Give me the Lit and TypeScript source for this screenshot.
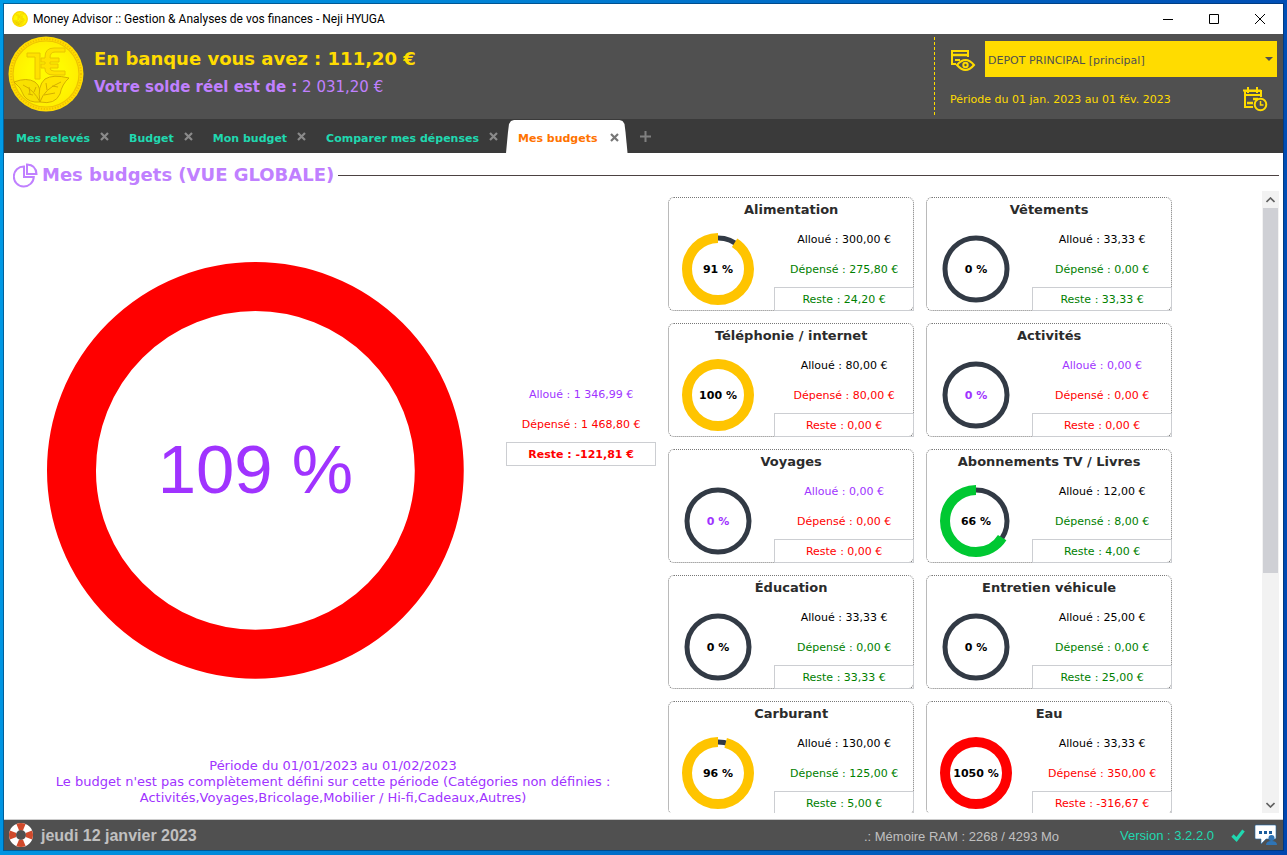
import { LitElement, html, svg, css, nothing } from "lit";
import { customElement, property } from "lit/decorators.js";
import { classMap } from "lit/directives/class-map.js";

type Tone = "plain" | "good" | "bad" | "unset";

interface Budget {
  name: string;
  percent: number;
  allotted: string;
  spent: string;
  rest: string;
  allottedTone: Tone;
  tone: Tone;
}

const budget = (
  name: string,
  percent: number,
  allotted: string,
  spent: string,
  rest: string,
  tone: Tone,
  allottedTone: Tone = "plain",
): Budget => ({ name, percent, allotted, spent, rest, tone, allottedTone });

const BUDGETS: Budget[] = [
  budget("Alimentation", 91, "300,00 €", "275,80 €", "24,20 €", "good"),
  budget("Vêtements", 0, "33,33 €", "0,00 €", "33,33 €", "good"),
  budget("Téléphonie / internet", 100, "80,00 €", "80,00 €", "0,00 €", "bad"),
  budget("Activités", 0, "0,00 €", "0,00 €", "0,00 €", "bad", "unset"),
  budget("Voyages", 0, "0,00 €", "0,00 €", "0,00 €", "bad", "unset"),
  budget("Abonnements TV / Livres", 66, "12,00 €", "8,00 €", "4,00 €", "good"),
  budget("Éducation", 0, "33,33 €", "0,00 €", "33,33 €", "good"),
  budget("Entretien véhicule", 0, "25,00 €", "0,00 €", "25,00 €", "good"),
  budget("Carburant", 96, "130,00 €", "125,00 €", "5,00 €", "good"),
  budget("Eau", 1050, "33,33 €", "350,00 €", "-316,67 €", "bad"),
];

const TABS = ["Mes relevés", "Budget", "Mon budget", "Comparer mes dépenses", "Mes budgets"];

@customElement("budget-card")
export class BudgetCard extends LitElement {
  @property({ attribute: false }) budget!: Budget;

  static styles = css`
    :host {
      display: block;
    }
    .card {
      box-sizing: border-box;
      height: 114px;
      border: 1px dotted #777;
      border-radius: 6px;
      display: grid;
      grid-template-columns: 105px 1fr;
      grid-template-rows: 26px 1fr;
    }
    .name {
      grid-column: 1 / 3;
      margin: 0;
      font-size: 13px;
      line-height: 24px;
      font-weight: bold;
      color: #2b2b2b;
      text-align: center;
    }
    .gauge {
      width: 74px;
      height: 74px;
      margin: 8px 0 0 12px;
    }
    .track {
      fill: none;
      stroke: #323a45;
      stroke-width: 5;
    }
    .arc {
      fill: none;
      stroke-width: 10;
      stroke: #ffc400;
    }
    .arc.low {
      stroke: #00c832;
    }
    .arc.over {
      stroke: #f00;
    }
    .percent {
      font-size: 11px;
      font-weight: bold;
      text-anchor: middle;
    }
    .percent.unset {
      fill: #a033ff;
    }
    .figures {
      display: flex;
      flex-direction: column;
      font-size: 11px;
      line-height: 30px;
      text-align: center;
      padding-top: 1px;
      margin: 0 -1px -1px 0;
    }
    .rest {
      box-sizing: border-box;
      height: 24px;
      border: 1px solid #ccced2;
      line-height: 22px;
      margin-top: 2px;
      padding-top: 1px;
    }
    .good {
      color: #008000;
    }
    .bad {
      color: #f00;
    }
    .unset {
      color: #a033ff;
    }
  `;

  render() {
    const b = this.budget;
    const share = Math.min(b.percent, 100);
    return html`
      <article class="card">
        <h3 class="name">${b.name}</h3>
        <svg class="gauge" viewBox="0 0 74 74" role="img" aria-label=${`${b.percent} %`}>
          <circle class="track" cx="37" cy="37" r="31" />
          ${share > 0
            ? svg`<circle
                class=${classMap({ arc: true, low: share < 75, over: b.percent > 100 })}
                cx="37" cy="37" r="31" pathLength="100"
                stroke-dasharray=${share >= 100 ? "none" : `${share} 100`}
                transform="translate(74 0) scale(-1 1) rotate(-90 37 37)" />`
            : nothing}
          <text class=${classMap({ percent: true, unset: b.allottedTone === "unset" })} x="37" y="41">
            ${b.percent} %
          </text>
        </svg>
        <div class="figures">
          <span class=${b.allottedTone}>Alloué : ${b.allotted}</span>
          <span class=${b.tone}>Dépensé : ${b.spent}</span>
          <span class="rest ${b.tone}">Reste : ${b.rest}</span>
        </div>
      </article>
    `;
  }
}

@customElement("app-root")
export class AppRoot extends LitElement {
  static styles = css`
    :host {
      display: block;
      box-sizing: border-box;
      height: 100vh;
      padding: 4px 4px 5px;
      background: linear-gradient(100deg, #009be6 0%, #0086d8 30%, #0062c0 65%, #0046b0 100%);
      font-family: "DejaVu Sans", Verdana, sans-serif;
      color: #000;
    }
    button {
      font: inherit;
      color: inherit;
      background: none;
      border: 0;
      padding: 0;
      display: block;
    }
    svg {
      display: block;
    }
    .window {
      height: 100%;
      display: flex;
      flex-direction: column;
      background: #fff;
      box-shadow: 0 0 0 1px rgba(0, 40, 80, 0.5);
    }

    .titlebar {
      flex: none;
      height: 30px;
      display: flex;
      align-items: center;
      padding-left: 8px;
      font: 12px/30px Roboto, "Segoe UI", sans-serif;
    }
    .title {
      flex: 1;
      margin: 0 0 0 5px;
      font: inherit;
    }
    .control {
      width: 46px;
      height: 30px;
      display: grid;
      place-items: center;
    }

    .header {
      flex: none;
      height: 85px;
      display: flex;
      background: #505050;
    }
    .coin {
      margin: 2px 0 0 4px;
    }
    .balances {
      flex: 1;
      padding: 11px 0 0 10px;
    }
    .bank,
    .real {
      margin: 0;
    }
    .bank {
      color: #ffdc00;
      font-size: 18px;
      line-height: 28px;
      font-weight: bold;
    }
    .real {
      color: #c080ff;
      font-size: 15px;
      line-height: 28px;
    }
    .account {
      box-sizing: border-box;
      width: 349px;
      margin: 3px 0 4px;
      padding: 4px 6px 0 15px;
      border-left: 1px dashed #ffdc00;
      color: #ffdc00;
    }
    .account-row,
    .period-row {
      display: flex;
      align-items: center;
    }
    .picker {
      flex: 1;
      margin-left: 9px;
      display: grid;
      align-items: center;
    }
    .picker select {
      grid-area: 1 / 1;
      width: 100%;
      height: 36px;
      appearance: none;
      border: 0;
      border-radius: 0;
      padding: 2px 3px 0;
      background: #ffdc00;
      color: #505050;
      font: 11px "DejaVu Sans", Verdana, sans-serif;
    }
    .picker svg {
      grid-area: 1 / 1;
      justify-self: end;
      margin-right: 4px;
      pointer-events: none;
    }
    .period-row {
      justify-content: space-between;
      padding-right: 9px;
      margin-top: 9px;
      font-size: 11px;
    }

    .tabs {
      flex: none;
      height: 34px;
      display: flex;
      background: #3a3a3a;
      color: #20d8b0;
      font-size: 11px;
      font-weight: bold;
    }
    .tab {
      display: flex;
      align-items: center;
      gap: 10px;
      padding: 5px 8px 0 12px;
    }
    .tab.active {
      margin: 1px 0 0;
      padding: 3px 9px 0 12px;
      gap: 12px;
      color: #ff7300;
      background: #fff;
      clip-path: polygon(0 100%, 2px 12px, 3px 4px, 5px 1px, 8px 0, calc(100% - 8px) 0, calc(100% - 5px) 1px, calc(100% - 3px) 4px, calc(100% - 2px) 12px, 100% 100%);
    }
    .close {
      padding-bottom: 4px;
      color: #8a8a8a;
    }
    .active .close {
      padding-bottom: 2px;
      color: #777;
    }
    .add {
      margin-left: 12px;
      color: #808080;
    }

    .section {
      flex: none;
      height: 38px;
      padding: 0 4px 0 9px;
      display: flex;
      align-items: center;
      gap: 4px;
      color: #c080ff;
    }
    .section-title {
      margin: 0;
      padding-top: 6px;
      font-size: 18px;
      line-height: 28px;
      font-weight: bold;
    }
    .section-icon {
      padding-top: 6px;
    }
    .rule {
      flex: 1;
      height: 1px;
      margin-top: 6px;
      background: #4c4242;
    }

    .content {
      flex: 1;
      min-height: 0;
      display: grid;
      grid-template-columns: minmax(0, 1.06fr) minmax(0, 1fr);
      grid-template-rows: minmax(0, 1fr);
      padding-bottom: 6px;
      border-bottom: 1px solid #ccc;
    }
    .overview {
      display: flex;
      flex-direction: column;
      color: #a033ff;
    }
    .summary {
      flex: 1;
      min-height: 0;
      display: flex;
      align-items: center;
      padding-right: 6px;
    }
    .total {
      flex: 1;
      display: grid;
      place-items: center;
    }
    .total svg {
      width: 83%;
      overflow: visible;
    }
    .total text {
      fill: #a033ff;
      font: 69px "Liberation Sans", Arial, sans-serif;
      text-anchor: middle;
    }
    .totals {
      width: 150px;
      padding-bottom: 92px;
      display: flex;
      flex-direction: column;
      font-size: 11px;
      line-height: 30px;
      text-align: center;
    }
    .over {
      color: #f00;
    }
    .remaining {
      box-sizing: border-box;
      height: 24px;
      margin: 2px 0 4px;
      padding-top: 1px;
      border: 1px solid #ccced2;
      line-height: 22px;
      font-weight: bold;
    }
    .notice {
      margin: 0;
      padding: 8px 40px 7px;
      font-size: 13px;
      line-height: 16px;
      text-align: center;
    }
    .board {
      min-height: 0;
      display: flex;
      padding: 0 4px 0 6px;
    }
    .cards {
      flex: 1;
      overflow: hidden;
      display: grid;
      grid-template-columns: repeat(auto-fill, 246px);
      grid-auto-rows: 114px;
      gap: 12px;
      padding-top: 6px;
    }
    .scrollbar {
      width: 17px;
      display: flex;
      flex-direction: column;
      align-items: center;
      background: #f2f2f2;
    }
    .step {
      height: 17px;
      width: 17px;
      display: grid;
      place-items: center;
    }
    .lane {
      flex: 1;
      width: 15px;
    }
    .thumb {
      height: 62%;
      background: #cfd0d5;
    }

    .footer {
      flex: none;
      height: 30px;
      display: flex;
      align-items: center;
      padding: 0 6px 0 5px;
      background: #505050;
      color: #c0c0c0;
      font-family: "Liberation Sans", Arial, sans-serif;
      font-size: 13px;
    }
    .date {
      flex: 1;
      margin-left: 8px;
      padding-top: 1px;
      font-size: 16px;
      font-weight: bold;
    }
    .memory {
      padding-top: 2px;
    }
    .version {
      margin: 0 17px 0 61px;
      color: #20d8b0;
    }
    .check {
      margin-right: 9px;
    }
  `;

  private coin(size: number) {
    return html`
      <svg width=${size} height=${size} viewBox="0 0 76 76" aria-hidden="true">
        <defs>
          <radialGradient id="gold">
            <stop offset="0.55" stop-color="#fffa00" />
            <stop offset="1" stop-color="#ffee00" />
          </radialGradient>
        </defs>
        <circle cx="38" cy="38" r="37.5" fill="#ffdc00" />
        <circle cx="38" cy="38" r="35" fill="none" stroke="#f0c000" stroke-width="2" stroke-dasharray="1.2 1.6" />
        <circle cx="38" cy="38" r="33" fill="url(#gold)" stroke="#edc400" stroke-width="1.2" />
        <g fill="#ffe100" stroke="#e8c400" stroke-width="1" stroke-linejoin="round">
          <path d="M19 17h13v26h-5V21h-8z" />
          <path
            d="M57 12H46q-9 0-9 9v1h-4v4h4v2h-4v4h4v1q0 6 9 6h11v-4H46q-4 0-4-3h8v-4h-8v-2h9v-4h-9q0-6 5-6h10z"
          />
        </g>
        <g stroke="#cfa800" stroke-width="0.9" stroke-linejoin="round">
          <path fill="#f8e000" d="M6 46q13-5 21 0 7 5 5 20-11 1-16-6-3-9-10-14z" />
          <path fill="#ffe400" d="M61 42q-16-4-24 1-8 7-5 23 15 3 20-8 2-10 9-16z" />
          <path fill="none" d="M15 49q11 5 17 17M32 66q4-13 21-20M21 51l1 7M26 56l2-5M25 59l-5-1M39 54l-1-7M36 59l11-2M44 50l6 1" />
        </g>
      </svg>
    `;
  }

  private cross() {
    return html`<svg width="9" height="9" viewBox="0 0 9 9"><path d="M1 1l7 7M8 1L1 8" stroke="currentColor" stroke-width="2.2" /></svg>`;
  }

  render() {
    return html`
      <div class="window">
        <div class="titlebar">
          ${this.coin(16)}
          <h1 class="title">Money Advisor :: Gestion &amp; Analyses de vos finances - Neji HYUGA</h1>
          <button class="control" aria-label="Réduire">
            <svg width="10" height="10"><path d="M0 5.5h10" stroke="#000" /></svg>
          </button>
          <button class="control" aria-label="Agrandir">
            <svg width="10" height="10"><path d="M.5.5h9v9h-9z" fill="none" stroke="#000" /></svg>
          </button>
          <button class="control" aria-label="Fermer">
            <svg width="10" height="10"><path d="M0 0l10 10M10 0L0 10" stroke="#000" /></svg>
          </button>
        </div>

        <header class="header">
          <div class="coin">${this.coin(76)}</div>
          <div class="balances">
            <p class="bank">En banque vous avez : 111,20 €</p>
            <p class="real"><b>Votre solde réel est de :</b> 2 031,20 €</p>
          </div>
          <div class="account">
            <div class="account-row">
              <svg width="26" height="24" viewBox="0 0 26 24" fill="none" stroke="#ffdc00" stroke-width="2" aria-hidden="true">
                <path d="M18 10V4H2v13h4" />
                <path d="M2 8h16" stroke-width="2.500" />
                <path d="M5 13h5" />
                <path d="M7 18q8.500-10 17 0q-8.500 10-17 0z" />
                <circle cx="15.500" cy="18" r="2.200" />
              </svg>
              <div class="picker">
                <select aria-label="Compte">
                  <option>DEPOT PRINCIPAL [principal]</option>
                </select>
                <svg width="8" height="4"><path d="M0 0h8L4 4z" fill="#505050" /></svg>
              </div>
            </div>
            <div class="period-row">
              <span>Période du 01 jan. 2023 au 01 fév. 2023</span>
              <button aria-label="Choisir la période">
                <svg width="26" height="26" viewBox="0 0 26 26" fill="none" stroke="#ffdc00" stroke-width="2">
                  <path d="M11 21H3V5h16v6M1 4.500h18M3 9h16M6 1v6M15 1v6" />
                  <path d="M11 13h5M5 17h6" stroke-width="2.500" />
                  <circle cx="18.500" cy="18.500" r="5.800" />
                  <path d="M18.500 15v4h3" stroke-width="1.500" />
                </svg>
              </button>
            </div>
          </div>
        </header>

        <nav class="tabs">
          ${TABS.map(
            (name, i) => html`
              <div class=${classMap({ tab: true, active: i === TABS.length - 1 })}>
                <button>${name}</button>
                <button class="close" aria-label="Fermer ${name}">${this.cross()}</button>
              </div>
            `,
          )}
          <button class="add" aria-label="Nouvel onglet">
            <svg width="11" height="11"><path d="M5.500 0v11M0 5.500h11" stroke="currentColor" stroke-width="2" /></svg>
          </button>
        </nav>

        <div class="section">
          <svg class="section-icon" width="25" height="25" viewBox="0 0 25 25" fill="none" stroke="#c080ff" stroke-width="2" aria-hidden="true">
            <path d="M11 3.500A10 10 0 1 0 20.800 14H11z" />
            <path d="M14 1.500v9.500h9.500q-.5-9-9.500-9.500z" />
          </svg>
          <h2 class="section-title">Mes budgets (VUE GLOBALE)</h2>
          <div class="rule"></div>
        </div>

        <main class="content">
          <section class="overview">
            <div class="summary">
              <div class="total">
                <svg viewBox="0 0 417 417">
                  <circle cx="208.500" cy="208.500" r="184" fill="none" stroke="#f00" stroke-width="49" />
                  <text x="208.500" y="231">109 %</text>
                </svg>
              </div>
              <div class="totals">
                <span>Alloué : 1 346,99 €</span>
                <span class="over">Dépensé : 1 468,80 €</span>
                <span class="remaining over">Reste : -121,81 €</span>
              </div>
            </div>
            <p class="notice">
              Période du 01/01/2023 au 01/02/2023<br />
              Le budget n'est pas complètement défini sur cette période (Catégories non définies :
              Activités,Voyages,Bricolage,Mobilier / Hi-fi,Cadeaux,Autres)
            </p>
          </section>

          <section class="board">
            <div class="cards">${BUDGETS.map((b) => html`<budget-card .budget=${b}></budget-card>`)}</div>
            <div class="scrollbar">
              <button class="step" aria-label="Défiler vers le haut">
                <svg width="9" height="6"><path d="M.5 5L4.500 1l4 4" fill="none" stroke="#606060" stroke-width="1.600" /></svg>
              </button>
              <div class="lane"><div class="thumb"></div></div>
              <button class="step" aria-label="Défiler vers le bas">
                <svg width="9" height="6"><path d="M.5 1l4 4 4-4" fill="none" stroke="#606060" stroke-width="1.600" /></svg>
              </button>
            </div>
          </section>
        </main>

        <footer class="footer">
          <svg width="24" height="24" viewBox="0 0 24 24" aria-hidden="true">
            <circle cx="12" cy="12" r="8.500" fill="none" stroke="#fff" stroke-width="7" />
            <circle
              cx="12" cy="12" r="8.500" fill="none" stroke="#d04a2c" stroke-width="7"
              pathLength="80" stroke-dasharray="10 10" stroke-dashoffset="5"
            />
          </svg>
          <span class="date">jeudi 12 janvier 2023</span>
          <span class="memory">.: Mémoire RAM : 2268 / 4293 Mo</span>
          <span class="version">Version : 3.2.2.0</span>
          <svg class="check" width="14" height="14" viewBox="0 0 14 14" aria-hidden="true">
            <path d="M1.500 7.500l4 4 7-9" fill="none" stroke="#20d8b0" stroke-width="3.200" />
          </svg>
          <button aria-label="Messages">
            <svg width="23" height="22" viewBox="0 0 23 22">
              <path d="M2 1h19q1 0 1 1v12q0 1-1 1h-9l-5 5v-5H2q-1 0-1-1V2q0-1 1-1z" fill="#fff" stroke="#2068a8" stroke-width=".6" />
              <path d="M5 7h3v3H5zM10 7h3v3h-3zM15 7h3v3h-3z" fill="#1a5c9c" />
              <circle cx="17.500" cy="14" r="3" fill="#2f74b5" />
              <path d="M12 21q0-4 5.500-4t5.500 4z" fill="#2f74b5" />
            </svg>
          </button>
        </footer>
      </div>
    `;
  }
}
